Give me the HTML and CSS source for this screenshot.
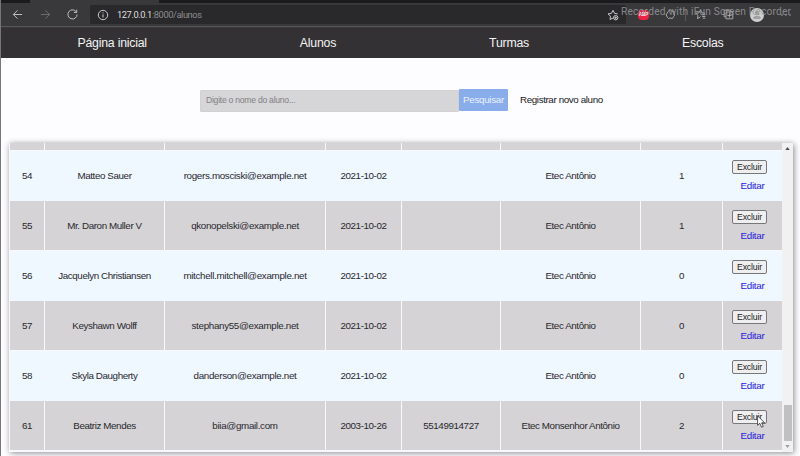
FILE: index.html
```
<!DOCTYPE html>
<html lang="pt-BR">
<head>
<meta charset="utf-8">
<title>Alunos</title>
<link rel="stylesheet" href="styles.css">
</head>
<body>
<div class="window">
  <header class="browser">
    <div class="tabs"><div class="tab"></div></div>
    <div class="toolbar">
      <svg class="nav-icon back" viewBox="0 0 12 12"><path d="M11 6H1.5M6 1.5L1.5 6L6 10.5"/></svg>
      <svg class="nav-icon forward" viewBox="0 0 12 12"><path d="M1 6h9.5M6 1.5L10.5 6L6 10.5"/></svg>
      <svg class="nav-icon reload" viewBox="0 0 12 12"><path d="M10.2 3.2A5 5 0 1 0 11 6M10.6 .8v3H7.5"/></svg>
      <div class="address">
        <svg class="info" viewBox="0 0 12 12"><circle cx="6" cy="6" r="4.7"/><path d="M6 5.3v3.2M6 3.3v1"/></svg>
        <span class="url">127.0.0.1<span>:8000/alunos</span></span>
        <svg class="fav" viewBox="0 0 12 12"><path d="M6 9L3 10.5l.5-3.3L1 4.9l3.4-.5L6 1.3l1.6 3.1 3 .5"/><circle cx="8.7" cy="8.7" r="2.2"/><path d="M7.5 8.7h2.4M8.7 7.5v2.4"/></svg>
      </div>
      <div class="extensions">
        <span class="abp">ABP</span>
        <svg viewBox="0 0 12 12"><path d="M4 2.2a2 2 0 0 1 3.5-.3L10 3l-.3 2.2a2 2 0 0 1-.2 3L8 10.5l-2.5-.7a2 2 0 0 1-3-.8L1.3 6.5l1-2z"/></svg>
        <i class="divider"></i>
        <svg viewBox="0 0 12 12"><path d="M6 8.5L2.7 10.5l.6-3.5L.8 4.6l3.5-.4L6 1l1.6 3.2 3.3.4M7.2 6.3h4M7.8 8.2h3.5M8.5 10h2.8"/></svg>
        <svg viewBox="0 0 12 12"><path d="M3 8.5H1.3V1.3h7.2V3M3.3 3.3h7.4v7.4H3.3zM7 4.7v4.6M4.7 7h4.6"/></svg>
        <svg class="avatar" viewBox="0 0 14 14"><circle class="disc" cx="7" cy="7" r="7"/><circle class="person" cx="7" cy="5" r="2.2"/><path class="person" d="M3 10c1-3 7-3 8 0l-1 1H4z"/></svg>
        <svg class="dots" viewBox="0 0 10 2"><circle cx="1" cy="1" r=".7"/><circle cx="5" cy="1" r=".7"/><circle cx="9" cy="1" r=".7"/></svg>
      </div>
    </div>
    <div class="watermark">Recorded with iFun Screen Recorder</div>
  </header>
  <nav class="menu"><a>Página inicial</a><a>Alunos</a><a>Turmas</a><a>Escolas</a></nav>
  <main>
    <form class="search">
      <div class="field">Digite o nome do aluno...</div>
      <div class="submit">Pesquisar</div>
      <a class="register">Registrar novo aluno</a>
    </form>
    <section class="panel">
      <div class="table">
        <div class="row partial"><div></div><div></div><div></div><div></div><div></div><div></div><div></div><div></div></div>
        <div class="row blue"><div>54</div><div>Matteo Sauer</div><div class="email">rogers.mosciski@example.net</div><div>2021-10-02</div><div></div><div>Etec Antônio</div><div>1</div><div class="actions"><span class="excluir">Excluir</span><a>Editar</a></div></div>
        <div class="row"><div>55</div><div>Mr. Daron Muller V</div><div class="email">qkonopelski@example.net</div><div>2021-10-02</div><div></div><div>Etec Antônio</div><div>1</div><div class="actions"><span class="excluir">Excluir</span><a>Editar</a></div></div>
        <div class="row blue"><div>56</div><div>Jacquelyn Christiansen</div><div class="email">mitchell.mitchell@example.net</div><div>2021-10-02</div><div></div><div>Etec Antônio</div><div>0</div><div class="actions"><span class="excluir">Excluir</span><a>Editar</a></div></div>
        <div class="row"><div>57</div><div>Keyshawn Wolff</div><div class="email">stephany55@example.net</div><div>2021-10-02</div><div></div><div>Etec Antônio</div><div>0</div><div class="actions"><span class="excluir">Excluir</span><a>Editar</a></div></div>
        <div class="row blue"><div>58</div><div>Skyla Daugherty</div><div class="email">danderson@example.net</div><div>2021-10-02</div><div></div><div>Etec Antônio</div><div>0</div><div class="actions"><span class="excluir">Excluir</span><a>Editar</a></div></div>
        <div class="row"><div>61</div><div>Beatriz Mendes</div><div class="email">biia@gmail.com</div><div>2003-10-26</div><div>55149914727</div><div>Etec Monsenhor Antônio</div><div>2</div><div class="actions"><span class="excluir">Excluir</span><a>Editar</a></div></div>
      </div>
      <div class="scrollbar">
        <svg viewBox="0 0 6 4"><path d="M0 4L3 0l3 4z"/></svg>
        <div class="track"><div class="thumb"></div></div>
        <svg class="down" viewBox="0 0 6 4"><path d="M0 0L3 4l3-4z"/></svg>
      </div>
    </section>
  </main>
  <svg class="cursor" viewBox="0 0 9 13"><path d="M.6 .8v9.5l2.2-2 1.7 3.9 1.8-.8-1.7-3.6h3z"/></svg>
</div>
</body>
</html>
```
FILE: styles.css
```
* { box-sizing: border-box; }
body { margin: 0; font-family: "Liberation Sans", Arial, sans-serif; }
.window { position: relative; width: 800px; height: 456px; overflow: hidden; background: #fdfcfe; border-left: 1px solid #77757a; }
.browser { position: relative; height: 28px; margin-left: -1px; background: #39393b; border-bottom: 1px solid #39383b; }
.tabs { height: 3px; background: #1b1a1d; }
.tab { width: 129px; height: 3px; margin-left: 30px; background: #39393b; }
.toolbar { display: flex; align-items: center; height: 24px; border-bottom: 1px solid #565557; }
.browser svg { fill: none; stroke: #c8c8c8; stroke-width: 1; }
.nav-icon { width: 11px; height: 11px; flex: none; }
.back { margin-left: 12px; }
.forward { margin-left: 17px; opacity: .4; }
.reload { margin-left: 16px; }
.address { display: flex; align-items: center; width: 536px; height: 19px; margin-left: 12px; border-radius: 2px; background: #29282b; flex: none; }
.info { width: 12px; height: 12px; margin-left: 7px; }
.url { width: 490px; margin-left: 8px; color: #dedede; font: 9.3px Roboto, sans-serif; letter-spacing: -.42px; white-space: nowrap; }
.url span { color: #8c8c8e; }
.fav { width: 12px; height: 12px; }
.extensions { display: flex; align-items: center; flex: 1; margin-left: 12px; }
.extensions svg { width: 11px; height: 11px; flex: none; opacity: .85; }
.extensions svg:nth-child(2) { margin-left: 16px; }
.abp { flex: none; width: 11px; height: 10px; border-radius: 4px; background: #ed2345; color: #fff; font: bold 4.5px/10px "Liberation Sans", sans-serif; text-align: center; }
.divider { flex: none; width: 1px; height: 12px; margin: 0 9px; background: #59595b; }
.extensions svg:nth-child(5) { margin-left: 17px; }
.extensions .avatar { width: 14px; height: 14px; margin-left: 16px; stroke: none; opacity: 1; }
.avatar .disc { fill: #cfcfcf; stroke: none; }
.avatar .person { fill: #a0a0a0; stroke: none; }
.extensions .dots { width: 10px; height: 2px; margin-left: 17px; fill: #ccc; stroke: none; }
.watermark { position: absolute; top: 5px; left: 621px; color: #98989a; opacity: .85; font: 10.2px/14px Roboto, sans-serif; letter-spacing: .2px; white-space: nowrap; }
.menu { display: flex; justify-content: space-around; height: 30px; margin-left: -1px; padding-left: 1px; background: #333134; color: #f4f4f4; font-size: 12.3px; letter-spacing: -.22px; line-height: 30px; }
.menu a { white-space: nowrap; }
.search { display: flex; align-items: flex-start; margin: 31px 0 0 199px; }
.field { width: 259px; height: 22px; margin-top: 1px; padding-left: 5px; border: 1px solid #d2d0d3; border-radius: 1px 0 0 1px; background: #d6d5d7; color: #828184; font-size: 8.6px; letter-spacing: -.25px; line-height: 19px; }
.submit { width: 49px; height: 22px; background: #89adeb; border-radius: 1px; color: #eaf0fc; font-size: 9.8px; letter-spacing: -.3px; line-height: 22px; text-align: center; }
.register { margin-left: 12px; color: #202023; font-size: 9.8px; letter-spacing: -.38px; line-height: 22px; }
.panel { display: flex; width: 784px; height: 309px; margin: 31px 0 0 8px; padding-left: 1px; background: #f9f8fa; box-shadow: 1px 1px 6px #8a888e; }
.table { width: 772px; display: flex; flex-direction: column; }
.row { display: grid; flex: none; height: 50px; grid-template-columns: 34px 119px 160px 75px 98px 139px 81px 59px; column-gap: 1px; padding: 0 0 1px; color: #29282d; font-size: 9.8px; letter-spacing: -.4px; }
.row > div { display: flex; align-items: center; justify-content: center; background: #d5d3d6; white-space: nowrap; }
.row > .email { letter-spacing: -.32px; }
.row.partial { height: 8px; }
.row.blue { background: #eff7ff; }
.row.blue > div { background: #eff7ff; }
.row > .actions { flex-direction: column; justify-content: flex-start; padding-top: 9px; padding-right: 6px; }
.excluir { width: 35px; height: 14px; border: 1px solid #77777b; border-radius: 2px; background: #efeff0; color: #222; font-size: 8.7px; letter-spacing: -.15px; line-height: 12px; text-align: center; }
.actions a { margin: 6px 0 0 6px; color: #2920dc; font-size: 9.8px; letter-spacing: -.25px; line-height: 11px; }
.scrollbar { width: 11px; display: flex; flex-direction: column; align-items: center; padding: 4px 0; background: #f1f1f2; }
.scrollbar svg { width: 5px; height: 3px; fill: #505052; }
.scrollbar .down { fill: #a0a0a2; }
.track { display: flex; align-items: flex-end; flex: 1; width: 8px; padding-bottom: 4px; }
.thumb { width: 8px; height: 36px; background: #c0bfc1; }
.cursor { position: absolute; left: 756px; top: 415px; width: 9px; height: 13px; fill: #fff; stroke: #303033; stroke-width: .8; }
```
